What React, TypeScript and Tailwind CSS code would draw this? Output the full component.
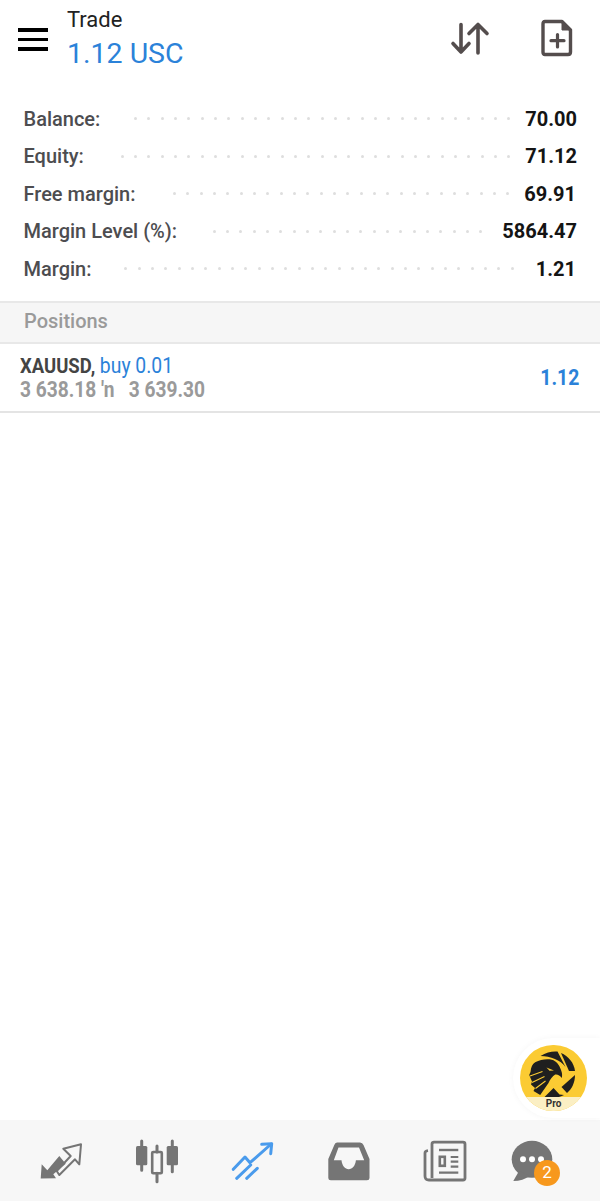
const rows = [
  { label: "Balance:", value: "70.00", gapR: "mr-[15px]", pr: "pr-[23px]" },
  { label: "Equity:", value: "71.12", gapR: "mr-[15px]", pr: "pr-[23px]" },
  { label: "Free margin:", value: "69.91", gapR: "mr-[15px]", pr: "pr-[24px]" },
  { label: "Margin Level (%):", value: "5864.47", gapR: "mr-[20px]", pr: "pr-[23px]" },
  { label: "Margin:", value: "1.21", gapR: "mr-[22px]", pr: "pr-[24px]" },
];

function Dots() {
  return (
    <div className="flex h-[3px] min-w-0 flex-1 justify-end gap-[10.33px] overflow-hidden">
      {Array.from({ length: 34 }).map((_, i) => (
        <span key={i} className="h-[3px] w-[3px] shrink-0 rounded-full bg-[#dedede]" />
      ))}
    </div>
  );
}

function TransferIcon() {
  return (
    <svg viewBox="0 0 48 48" className="h-12 w-12 overflow-visible">
      <path d="M4.7 41.5 5.7 27.3 11.3 33.3 23.3 19 29.7 26.7 17.3 37.3 20 41.3Z" fill="#757575" />
      <path d="M27.3 11.7 45 7.3 43.3 27.3 39 22.3 23.3 38 20.7 34 34.7 19Z" fill="none" stroke="#757575" strokeWidth="2" strokeLinejoin="round" />
    </svg>
  );
}

function CandlesIcon() {
  return (
    <svg viewBox="0 0 48 48" className="h-12 w-12 overflow-visible">
      <path d="M9.7 4v29.3M40.3 4v30.7" stroke="#757575" strokeWidth="3" strokeLinecap="round" />
      <rect x="4" y="9" width="11.3" height="19.3" rx="1.5" fill="#757575" />
      <rect x="34.7" y="9" width="11.3" height="19.3" rx="1.5" fill="#757575" />
      <path d="M25 9v6M25 36.3v8.4" stroke="#757575" strokeWidth="3" strokeLinecap="round" />
      <rect x="20.2" y="15" width="9.6" height="21.3" rx="1" fill="none" stroke="#757575" strokeWidth="2.6" />
    </svg>
  );
}

function TradeIcon() {
  return (
    <svg viewBox="0 0 48 48" fill="none" stroke="#4a9bec" strokeWidth="3" strokeLinecap="round" strokeLinejoin="round" className="h-12 w-12 overflow-visible">
      <path d="M5.3 32.3 17 20 22 25.7 43.2 7" />
      <path d="M33.7 7.3 43.7 6.7 42.7 16.7" />
      <path d="M8.7 41.3 22.7 28M18.7 41.3 29.3 31.3" />
    </svg>
  );
}

function InboxIcon() {
  return (
    <svg viewBox="0 0 48 48" className="h-12 w-12 overflow-visible">
      <path
        fillRule="evenodd"
        fill="#757575"
        d="M13 5.5H36Q38.5 5.5 39.5 8L45.5 22V41Q45.5 43.2 43 43.2H6.8Q4.3 43.2 4.3 41V22L10.3 8Q11 5.5 13 5.5ZM14.5 10.5 9.8 23.3H17.5C18 28.5 21 32.3 24.7 32.3S31.4 28.5 31.9 23.3H40.2L35 10.5Z"
      />
    </svg>
  );
}

function NewsIcon() {
  return (
    <svg viewBox="0 0 48 48" fill="none" stroke="#757575" className="h-12 w-12 overflow-visible">
      <path d="M12 41V7Q12 5.2 14 5.2H43Q45 5.2 45 7V41Q45 43 43 43H9Q5 43 5 39V16Q5 14 8 13.6" strokeWidth="2.8" />
      <path d="M19 13H38.3" strokeWidth="2.4" />
      <rect x="19.8" y="19.8" width="5" height="9" strokeWidth="2.6" />
      <path d="M30.7 20H38.3M30.7 24.7H38.3M30.7 29.7H38.3M19 35.7H38.3" strokeWidth="2.2" />
    </svg>
  );
}

function ChatIcon() {
  return (
    <div className="relative h-12 w-12">
      <svg viewBox="0 0 48 48" className="h-12 w-12 overflow-visible">
        <ellipse cx="16" cy="22.3" rx="20.3" ry="18.5" fill="#757575" />
        <path d="M3 34 -2.7 44 C4 44 9 42 14 39Z" fill="#757575" />
        <circle cx="7" cy="22.3" r="3" fill="#fff" />
        <circle cx="16" cy="22.3" r="3" fill="#fff" />
        <circle cx="25" cy="22.3" r="3" fill="#fff" />
      </svg>
      <span className="absolute left-[18px] top-[23px] flex h-[26px] w-[26px] items-center justify-center rounded-full bg-[#f7981d] text-[17px] leading-none text-white">
        2
      </span>
    </div>
  );
}

function ProBadge() {
  return (
    <div className="absolute bottom-[83px] right-0 flex h-[80px] w-[87px] items-center rounded-l-[40px] bg-white pl-[7px] shadow-[0_0_6px_rgba(0,0,0,0.04)]">
      <div className="relative h-[66px] w-[67px] overflow-hidden rounded-full bg-[#fbcb33]">
        <svg viewBox="0 0 66 66" className="h-[66px] w-[67px]">
          {/* shutter blades */}
          <path d="M20 11C26 7 32 6 37 6.5L45 22C40 15 30 11 20 11Z" fill="#1f1f1f" />
          <path d="M40.5 8C48 11 53.5 18 54.5 26L48.5 26Z" fill="#1f1f1f" />
          <path d="M54.5 30C54.5 37 51.5 44 46.5 48L41 42Z" fill="#1f1f1f" />
          <path d="M43.5 50C38 53 30 53.5 24 52L33 43 39 49.5Z" fill="#1f1f1f" />
          {/* eagle */}
          <path
            fill="#1f1f1f"
            d="M19.7 50 13 46 14.5 43 10.5 39.5 11.5 36.5 8.7 30 10 27C10.5 22 12 19 14.7 17.3 20 14.5 26 13.5 31.3 14.7 36 16 39 20 40.5 25 41.8 28 41.8 30.5 41.3 33 39.5 30.5 37 29 34.7 29.5 32 31.5 29.7 34 28 38 24.7 42.3 22 46Z"
          />
          <path d="M26 22.5 33.5 25.5 29 25.8Z" fill="#fbcb33" />
          <path d="M9.5 31 22 26.5M11.5 37.5 24 31.5M15 43.5 25 36" stroke="#fbcb33" strokeWidth="1.1" />
        </svg>
        <div className="absolute inset-x-0 bottom-0 flex h-[14px] justify-center bg-[#fbefc4] text-[10px] font-bold leading-[13px] text-[#333]">
          Pro
        </div>
      </div>
    </div>
  );
}

export default function App() {
  return (
    <div className="relative flex h-[1201px] w-[600px] flex-col overflow-hidden bg-white font-['Roboto',sans-serif]">
      <header className="flex h-[104px] shrink-0 items-start">
        <div className="ml-[18px] mt-[28px] flex w-[30px] flex-col gap-[6px]">
          <span className="h-[3.5px] bg-black" />
          <span className="h-[3.5px] bg-black" />
          <span className="h-[3.5px] bg-black" />
        </div>
        <div className="ml-[19px] mt-[7px] flex flex-1 flex-col">
          <span className="text-[22px] leading-[26px] text-[#222]">Trade</span>
          <span className="mt-[2px] text-[28.5px] leading-[38px] text-[#2b82d9]">1.12 USC</span>
        </div>
        <svg viewBox="0 0 44 36" fill="none" stroke="#544d4d" strokeWidth="3.6" strokeLinecap="round" strokeLinejoin="round" className="mr-[49px] mt-[20px] h-[36px] w-[44px]">
          <path d="M13 4.5V32M5 23.5 13 32 21 23.5" />
          <path d="M30 33V4.5M21 13.5 30 4.5 39 13.5" />
        </svg>
        <svg viewBox="0 0 32 38" fill="none" stroke="#544d4d" className="mr-[27px] mt-[19px] h-[38px] w-[32px]">
          <path d="M4 2.5H21L29.5 11V33Q29.5 35.5 27 35.5H4Q2 35.5 2 33V5Q2 2.5 4 2.5Z" strokeWidth="3.4" strokeLinejoin="round" />
          <path d="M21 2.5 29.5 11H21Z" fill="#544d4d" strokeWidth="1" />
          <path d="M16.5 15.5V28M10 21.7H23" strokeWidth="3.2" strokeLinecap="round" />
        </svg>
      </header>

      <section className="flex flex-col gap-[8.5px]">
        {rows.map((row) => (
          <div key={row.label} className={`flex h-[29px] items-center pl-[23.5px] ${row.pr}`}>
            <span className="whitespace-nowrap text-[20px] font-medium text-[#4d4d50]">{row.label}</span>
            <div className={`ml-[32px] flex min-w-0 flex-1 ${row.gapR}`}>
              <Dots />
            </div>
            <span className="whitespace-nowrap text-[20px] font-bold text-[#141414]">{row.value}</span>
          </div>
        ))}
      </section>

      <div className="mt-[18px] flex h-[43px] shrink-0 items-center border-y-2 border-[#e8e8e8] bg-[#f6f6f6] pb-[4px] pl-[24px] text-[20px] font-medium text-[#9a9a9a]">
        Positions
      </div>

      <div className="flex h-[69px] shrink-0 items-center justify-between border-b-2 border-[#e4e4e4] pl-[20px] pr-[21px]">
        <div className="flex flex-col leading-[24px]">
          <div className="origin-left scale-x-[0.88] whitespace-nowrap text-[22px]">
            <span className="text-[21px] font-bold text-[#444]">XAUUSD, </span>
            <span className="text-[#2b82d9]">buy 0.01</span>
          </div>
          <div className="origin-left scale-x-[0.87] whitespace-pre text-[22px] font-bold text-[#9a9a9a]">
            3 638.18 ′n   3 639.30
          </div>
        </div>
        <span className="origin-right scale-x-[0.88] text-[22px] font-bold text-[#2b82d9]">1.12</span>
      </div>

      <div className="flex-1" />

      <ProBadge />

      <nav className="grid h-[81px] shrink-0 grid-cols-6 items-center justify-items-center bg-[#f7f7f7] px-[12px]">
        <TransferIcon />
        <CandlesIcon />
        <TradeIcon />
        <InboxIcon />
        <NewsIcon />
        <ChatIcon />
      </nav>
    </div>
  );
}
